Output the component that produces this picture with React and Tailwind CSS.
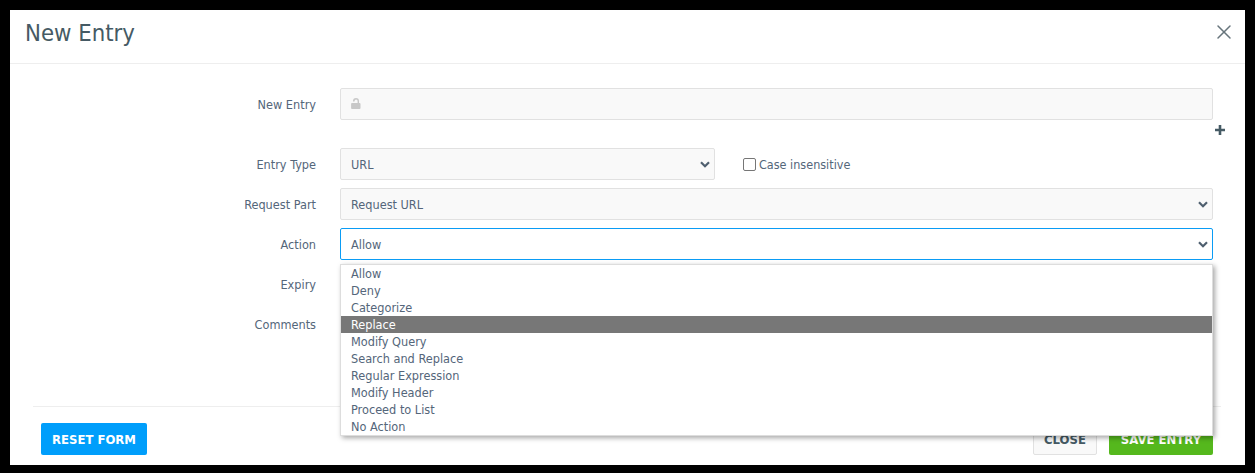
import React from 'react';
import { X } from 'lucide-react';

const ACTIONS = ['Allow', 'Deny', 'Categorize', 'Replace', 'Modify Query', 'Search and Replace', 'Regular Expression', 'Modify Header', 'Proceed to List', 'No Action'];

const Row = ({ label, children }) => (
    <div className="flex items-center h-8 mb-2">
        <label className="w-[306px] mr-6 pt-[2px] text-right text-[12.6px] text-[#54667a]">{label}</label>
        {children}
    </div>
);

const Chevron = () => (
    <svg width="10" height="7" viewBox="0 0 10 7" fill="none" stroke="#4f5f6f" strokeWidth="2.2" className="mt-[1px]">
        <path d="M1 1.2l4 4 4-4" />
    </svg>
);

const Select = ({ value, className = '' }) => (
    <div className={`h-8 flex items-center justify-between pl-[10px] pr-[4px] border rounded-[2px] text-[12.6px] text-[#54667a] ${className}`}>
        <span className="pt-[2px]">{value}</span>
        <Chevron />
    </div>
);

const App = () => {
    return (
        <div className="h-[473px] bg-black p-[10px] font-['DejaVu_Sans',sans-serif] [font-stretch:condensed] overflow-hidden">
            <div className="h-[455px] bg-white flex flex-col">
                {/* Header */}
                <div className="h-[54px] shrink-0 flex items-center justify-between pl-[15px] pr-[9px] border-b border-[#eeeeee]">
                    <h1 className="text-[23.7px] font-normal text-[#455a64] mb-[6px]">New Entry</h1>
                    <X size={24} strokeWidth={1.5} className="text-[#67757c] mb-[9px]" />
                </div>

                {/* Form */}
                <div className="relative h-[342px] shrink-0 pt-6 pr-8">
                    <div className="flex items-center h-8">
                        <label className="w-[306px] mr-6 pt-[2px] text-right text-[12.6px] text-[#54667a]">New Entry</label>
                        <div className="flex-1 h-8 flex items-center pl-[10px] pb-[2px] bg-[#f9f9f9] border border-[#e1e1e1] rounded-[2px]">
                            <svg width="10" height="11" viewBox="0 0 10 11" fill="#c8c8c8">
                                <path d="M1 5h5.600V3a1.500 1.500 0 0 0-3 0v.6H2V3a3 3 0 0 1 6 0v2h.6a.9.9 0 0 1 .9.9v4.200a.9.9 0 0 1-.9.9H1a.9.9 0 0 1-.9-.9V5.900A.9.9 0 0 1 1 5z" />
                            </svg>
                        </div>
                    </div>
                    <div className="h-7 flex items-center justify-end -mr-3 pb-[8px]">
                        <svg width="10" height="10" viewBox="0 0 10 10" fill="#455a64">
                            <path d="M3.7 0h2.6v3.7H10v2.6H6.3V10H3.700V6.300H0V3.700h3.700z" />
                        </svg>
                    </div>

                    <Row label="Entry Type">
                        <Select value="URL" className="w-[375px] bg-[#f9f9f9] border-[#e1e1e1]" />
                        <label className="ml-7 flex items-center text-[12.5px] text-[#54667a]">
                            <span className="w-[13px] h-[13px] mt-[1px] mr-[3px] border border-[#767676] rounded-[2px] bg-white"></span>
                            <span className="pt-[2px]">Case insensitive</span>
                        </label>
                    </Row>
                    <Row label="Request Part">
                        <Select value="Request URL" className="flex-1 bg-[#f9f9f9] border-[#e1e1e1]" />
                    </Row>
                    <Row label="Action">
                        <Select value="Allow" className="flex-1 bg-white border-[#0a9cf5]" />
                    </Row>
                    <Row label="Expiry">
                        <div className="flex-1 h-8 border border-[#e1e1e1]"></div>
                    </Row>
                    <Row label="Comments">
                        <div className="flex-1 h-8 border border-[#e1e1e1]"></div>
                    </Row>

                    {/* Open option list */}
                    <ul className="absolute left-[330px] right-8 top-[200px] border border-[#dddddd] bg-white shadow-[2px_2px_5px_rgba(0,0,0,0.35)] z-10 text-[12.6px] text-[#54667a]">
                        {ACTIONS.map((action) => (
                            <li key={action} className={`h-[17px] leading-[17px] pl-[10px] ${action === 'Replace' ? 'bg-[#777777] text-white' : ''}`}>
                                {action}
                            </li>
                        ))}
                    </ul>
                </div>

                {/* Footer */}
                <div className="mx-[23px] mr-6 pt-4 px-2 border-t border-[#eeeeee] flex items-center justify-between">
                    <button className="h-8 w-[106px] pt-1 bg-[#009efb] rounded-[2px] text-white text-[11.7px] font-bold [font-stretch:normal]">RESET FORM</button>
                    <div className="flex gap-3">
                        <button className="h-8 w-16 pt-1 bg-[#f9f9f9] border border-[#e1e1e1] rounded-[2px] text-[#455a64] text-[11.7px] font-bold [font-stretch:normal]">CLOSE</button>
                        <button className="h-8 w-[104px] pt-1 bg-[#55b81d] rounded-[2px] text-white text-[11.7px] font-bold [font-stretch:normal]">SAVE ENTRY</button>
                    </div>
                </div>
            </div>
        </div>
    );
};

export default App;
